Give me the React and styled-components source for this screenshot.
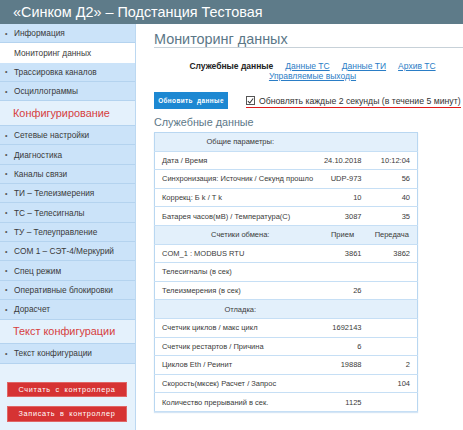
import React from "react";
import styled, { createGlobalStyle } from "styled-components";

const Global = createGlobalStyle`
  html, body { margin: 0; padding: 0; background: #fff; }
  body { font-family: "Liberation Sans", Arial, sans-serif; color: #333; }
  * { box-sizing: border-box; }
`;

const Page = styled.div`
  width: 463px;
  height: 430px;
  overflow: hidden;
  display: flex;
  flex-direction: column;
`;

const TopBar = styled.header`
  height: 24px;
  flex: none;
  background: #5e7b89;
  color: #fff;
  font-size: 14.4px;
  line-height: 24px;
  padding-left: 13px;
  white-space: nowrap;
`;

const Body = styled.div`
  flex: 1;
  display: flex;
  min-height: 0;
`;

const Sidebar = styled.nav`
  width: 136px;
  flex: none;
  background: #e6f2fc;
  border-right: 1px solid #bcd8f1;
  display: flex;
  flex-direction: column;
`;

const NavItem = styled.div`
  height: 19.35px;
  display: flex;
  align-items: center;
  padding-left: 14px;
  position: relative;
  font-size: 8.3px;
  color: #3a3a3a;
  background: ${(p) => (p.$active ? "#fff" : "#cbe3f9")};
  border-bottom: 1px solid ${(p) => (p.$active ? "#fff" : "#b4d3ef")};
  white-space: nowrap;
  &::before {
    content: ${(p) => (p.$active ? "none" : '"•"')};
    position: absolute;
    left: 5px;
    font-size: 7px;
    color: #555;
  }
`;

const NavSection = styled.div`
  height: 24.7px;
  display: flex;
  align-items: center;
  padding-left: 13px;
  font-size: 10.9px;
  color: #d6403e;
  background: #e4f1fc;
  border-bottom: 1px solid #b4d3ef;
  white-space: nowrap;
`;

const SideButtons = styled.div`
  display: flex;
  flex-direction: column;
  gap: 9px;
  padding: 18px 0 0 7px;
`;

const RedButton = styled.button`
  width: 120px;
  height: 15.5px;
  padding: 0;
  border: 1px solid #e06666;
  background: #d63333;
  color: #fff;
  font-family: "Liberation Sans", Arial, sans-serif;
  font-size: 7.3px;
  letter-spacing: 0.7px;
  word-spacing: 2px;
  white-space: nowrap;
  cursor: pointer;
`;

const Main = styled.main`
  flex: 1;
  padding: 0 0 0 18px;
  display: flex;
  flex-direction: column;
  min-width: 0;
`;

const PageTitle = styled.h1`
  margin: 7px 0 0 0;
  font-weight: normal;
  font-size: 14.4px;
  line-height: 16px;
  color: #5b7787;
  border-bottom: 1px solid #c7d1d8;
  white-space: nowrap;
`;

const Tabs = styled.div`
  margin-top: 13px;
  padding: 0 0 0 8px;
  text-align: center;
  font-size: 8.5px;
  line-height: 10px;
`;

const Tab = styled.a`
  display: inline-block;
  margin: 0 6px;
  color: ${(p) => (p.$current ? "#222" : "#2a7dc6")};
  font-weight: ${(p) => (p.$current ? "bold" : "normal")};
  text-decoration: ${(p) => (p.$current ? "none" : "underline")};
  cursor: pointer;
`;

const ActionRow = styled.div`
  margin-top: 11px;
  display: flex;
  align-items: center;
  gap: 18px;
`;

const BlueButton = styled.button`
  width: 74px;
  height: 17px;
  padding: 0;
  border: none;
  background: #1d88d2;
  color: #fff;
  font-family: "Liberation Sans", Arial, sans-serif;
  font-weight: bold;
  font-size: 6.4px;
  letter-spacing: 0.4px;
  word-spacing: 2px;
  white-space: nowrap;
`;

const AutoUpdate = styled.label`
  display: flex;
  align-items: center;
  gap: 4px;
  font-size: 8.7px;
  color: #333;
  white-space: nowrap;
  border-bottom: 1.5px solid #e01b1b;
  line-height: 12px;
  margin-top: 1px;
`;

const CheckBox = styled.span`
  width: 9px;
  height: 9px;
  border: 1px solid #555;
  display: inline-flex;
  align-items: center;
  justify-content: center;
  background: #fff;
  svg { display: block; }
`;

const SectionTitle = styled.h2`
  margin: 6px 0 3px 0;
  font-weight: normal;
  font-size: 10.8px;
  line-height: 14px;
  color: #5d7888;
`;

const Table = styled.table`
  width: 263px;
  table-layout: fixed;
  border-collapse: collapse;
  border: 1px solid #b9d7f1;
  font-size: 7.5px;
  color: #3a3a3a;
  box-shadow: 0 1px 1px rgba(150, 190, 230, 0.4);
`;

const Row = styled.tr`
  height: 18.6px;
  background: ${(p) => (p.$head ? "#e3f0fb" : "#fff")};
  border-bottom: 1px solid #c6dff5;
`;

const Label = styled.td`
  padding: 0 0 0 7px;
  text-align: ${(p) => (p.$center ? "center" : "left")};
  white-space: nowrap;
  overflow: hidden;
`;

const Val = styled.td`
  padding: 0 ${(p) => p.$pad}px 0 0;
  text-align: ${(p) => (p.$center ? "center" : "right")};
  white-space: nowrap;
`;

const rows = [
  { head: true, l: "Общие параметры:", a: "", b: "" },
  { l: "Дата / Время", a: "24.10.2018", b: "10:12:04" },
  { l: "Синхронизация: Источник / Секунд прошло", a: "UDP-973", b: "56" },
  { l: "Коррекц: Б k / T k", a: "10", b: "40" },
  { l: "Батарея часов(мВ) / Температура(С)", a: "3087", b: "35" },
  { head: true, l: "Счетики обмена:", a: "Прием", b: "Передача" },
  { l: "COM_1 : MODBUS RTU", a: "3861", b: "3862" },
  { l: "Телесигналы (в сек)", a: "", b: "" },
  { l: "Телеизмерения (в сек)", a: "26", b: "" },
  { head: true, l: "Отладка:", a: "", b: "" },
  { l: "Счетчик циклов / макс цикл", a: "1692143", b: "" },
  { l: "Счетчик рестартов / Причина", a: "6", b: "" },
  { l: "Циклов Eth / Реинит", a: "19888", b: "2" },
  { l: "Скорость(мксек) Расчет / Запрос", a: "", b: "104" },
  { l: "Количество прерываний в сек.", a: "1125", b: "" },
];

const navTop = ["Информация", "Мониторинг данных", "Трассировка каналов", "Осциллограммы"];
const navConf = [
  "Сетевые настройки",
  "Диагностика",
  "Каналы связи",
  "ТИ – Телеизмерения",
  "ТС – Телесигналы",
  "ТУ – Телеуправление",
  "COM 1 – СЭТ-4/Меркурий",
  "Спец режим",
  "Оперативные блокировки",
  "Дорасчет",
];

export default function App() {
  return (
    <Page>
      <Global />
      <TopBar>«Синком Д2» – Подстанция Тестовая</TopBar>
      <Body>
        <Sidebar>
          {navTop.map((t) => (
            <NavItem key={t} $active={t === "Мониторинг данных"}>{t}</NavItem>
          ))}
          <NavSection>Конфигурирование</NavSection>
          {navConf.map((t) => (
            <NavItem key={t}>{t}</NavItem>
          ))}
          <NavSection>Текст конфигурации</NavSection>
          <NavItem>Текст конфигурации</NavItem>
          <SideButtons>
            <RedButton>Считать с контроллера</RedButton>
            <RedButton>Записать в контроллер</RedButton>
          </SideButtons>
        </Sidebar>
        <Main>
          <PageTitle>Мониторинг данных</PageTitle>
          <Tabs>
            <Tab $current>Служебные данные</Tab>
            <Tab>Данные ТС</Tab>
            <Tab>Данные ТИ</Tab>
            <Tab>Архив ТС</Tab>
            <Tab>Управляемые выходы</Tab>
          </Tabs>
          <ActionRow>
            <BlueButton>Обновить данные</BlueButton>
            <AutoUpdate>
              <CheckBox>
                <svg width="8" height="8" viewBox="0 0 8 8">
                  <path d="M1 4.2 L3.2 6.3 L7 1.2" fill="none" stroke="#333" strokeWidth="1.2" />
                </svg>
              </CheckBox>
              Обновлять каждые 2 секунды (в течение 5 минут)
            </AutoUpdate>
          </ActionRow>
          <SectionTitle>Служебные данные</SectionTitle>
          <Table>
            <colgroup>
              <col style={{ width: 164 }} />
              <col style={{ width: 48 }} />
              <col style={{ width: 51 }} />
            </colgroup>
            <tbody>
              {rows.map((r, i) => (
                <Row key={i} $head={r.head}>
                  <Label $center={r.head}>{r.l}</Label>
                  <Val $pad={r.head ? 0 : 5} $center={r.head}>{r.a}</Val>
                  <Val $pad={r.head ? 0 : 7} $center={r.head}>{r.b}</Val>
                </Row>
              ))}
            </tbody>
          </Table>
        </Main>
      </Body>
    </Page>
  );
}
